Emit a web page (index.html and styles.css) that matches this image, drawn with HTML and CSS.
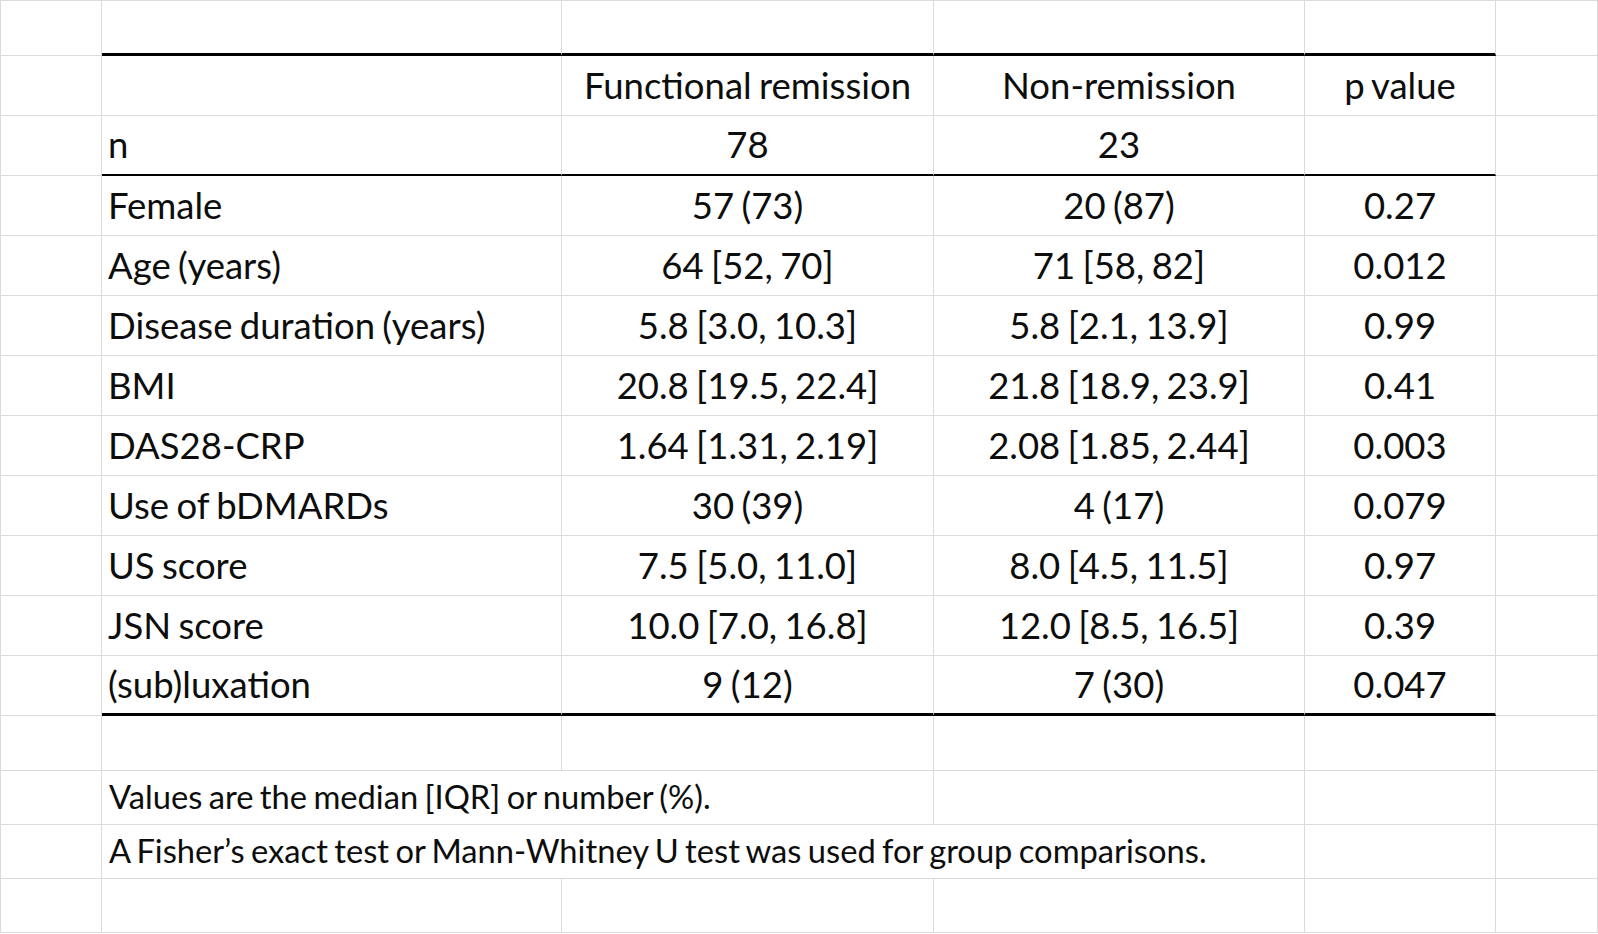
FILE: index.html
```html
<!DOCTYPE html>
<html lang="en">
<head>
<meta charset="utf-8">
<title>Table</title>
<link rel="stylesheet" href="styles.css">
</head>
<body>
<div class="sheet">
  <!-- row 1 -->
  <div class="c"></div><div class="c top"></div><div class="c top"></div><div class="c top"></div><div class="c top"></div><div class="c"></div>
  <!-- row 2 header -->
  <div class="c"></div><div class="c l"></div><div class="c">Functional remission</div><div class="c">Non-remission</div><div class="c">p value</div><div class="c"></div>
  <!-- row 3 n -->
  <div class="c"></div><div class="c l mid">n</div><div class="c mid">78</div><div class="c mid">23</div><div class="c mid"></div><div class="c"></div>
  <!-- data rows -->
  <div class="c"></div><div class="c l">Female</div><div class="c">57 (73)</div><div class="c">20 (87)</div><div class="c">0.27</div><div class="c"></div>
  <div class="c"></div><div class="c l">Age (years)</div><div class="c">64 [52, 70]</div><div class="c">71 [58, 82]</div><div class="c">0.012</div><div class="c"></div>
  <div class="c"></div><div class="c l">Disease duration (years)</div><div class="c">5.8 [3.0, 10.3]</div><div class="c">5.8 [2.1, 13.9]</div><div class="c">0.99</div><div class="c"></div>
  <div class="c"></div><div class="c l">BMI</div><div class="c">20.8 [19.5, 22.4]</div><div class="c">21.8 [18.9, 23.9]</div><div class="c">0.41</div><div class="c"></div>
  <div class="c"></div><div class="c l">DAS28-CRP</div><div class="c">1.64 [1.31, 2.19]</div><div class="c">2.08 [1.85, 2.44]</div><div class="c">0.003</div><div class="c"></div>
  <div class="c"></div><div class="c l">Use of bDMARDs</div><div class="c">30 (39)</div><div class="c">4 (17)</div><div class="c">0.079</div><div class="c"></div>
  <div class="c"></div><div class="c l">US score</div><div class="c">7.5 [5.0, 11.0]</div><div class="c">8.0 [4.5, 11.5]</div><div class="c">0.97</div><div class="c"></div>
  <div class="c"></div><div class="c l">JSN score</div><div class="c">10.0 [7.0, 16.8]</div><div class="c">12.0 [8.5, 16.5]</div><div class="c">0.39</div><div class="c"></div>
  <div class="c"></div><div class="c l bot">(sub)luxation</div><div class="c bot">9 (12)</div><div class="c bot">7 (30)</div><div class="c bot">0.047</div><div class="c"></div>
  <!-- empty row -->
  <div class="c"></div><div class="c"></div><div class="c"></div><div class="c"></div><div class="c"></div><div class="c"></div>
  <!-- footnotes -->
  <div class="c"></div><div class="c l note span2">Values are the median [IQR] or number (%).</div><div class="c"></div><div class="c"></div><div class="c"></div>
  <div class="c"></div><div class="c l note span3">A Fisher’s exact test or Mann-Whitney U test was used for group comparisons.</div><div class="c"></div><div class="c"></div>
  <div class="c"></div><div class="c"></div><div class="c"></div><div class="c"></div><div class="c"></div><div class="c"></div>
</div>
</body>
</html>
```

FILE: styles.css
```css
html, body {
  margin: 0;
  padding: 0;
  background: #ffffff;
}

.sheet {
  display: grid;
  grid-template-columns: 101px 460px 372px 371px 191px 102px;
  grid-template-rows: 55px repeat(11, 60px) 55px 54px 54px 54px;
  border-top: 1px solid #dadada;
  border-left: 1px solid #dadada;
  font-family: Lato, "Liberation Sans", sans-serif;
  font-size: 36.5px;
  word-spacing: -2px;
  color: #0d0d0d;
  width: 1598px;
  box-sizing: border-box;
}

.c {
  box-sizing: border-box;
  border-right: 1px solid #dadada;
  border-bottom: 1px solid #dadada;
  display: flex;
  align-items: center;
  justify-content: center;
  white-space: nowrap;
  overflow: visible;
  padding-bottom: 2px;
}

.l {
  justify-content: flex-start;
  padding-left: 6px;
}

.note {
  font-size: 32.7px;
  padding-left: 7px;
}

.top {
  border-bottom: 3px solid #000000;
}

.mid {
  border-bottom: 2px solid #000000;
}

.bot {
  border-bottom: 3px solid #000000;
}

.span2 {
  grid-column: span 2;
}

.span3 {
  grid-column: span 3;
}
```
